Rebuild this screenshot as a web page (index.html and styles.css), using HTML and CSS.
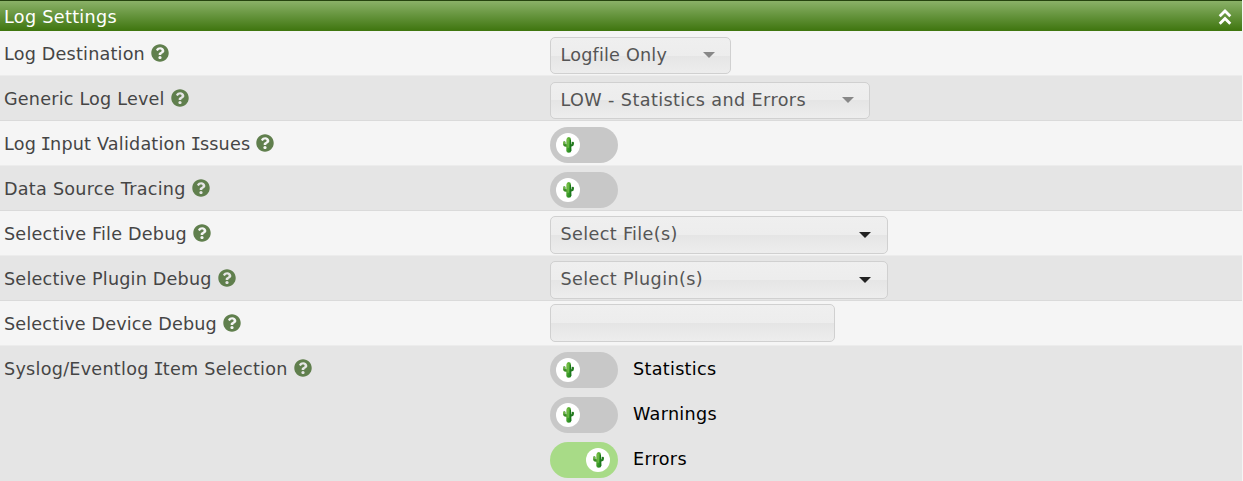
FILE: index.html
```html
<!DOCTYPE html>
<html lang="en">
<head>
<meta charset="utf-8">
<title>Log Settings</title>
<link rel="stylesheet" href="styles.css">
</head>
<body>
<svg class="defs" aria-hidden="true">
  <defs>
    <linearGradient id="stem" x1="0" x2="1" y1="0" y2="1">
      <stop offset="0" stop-color="#77be3e"/>
      <stop offset="0.5" stop-color="#429f2c"/>
      <stop offset="1" stop-color="#147a1a"/>
    </linearGradient>
    <symbol id="help" viewBox="0 0 512 512">
      <path d="M504 256c0 136.997-111.043 248-248 248S8 392.997 8 256C8 119.083 119.043 8 256 8s248 111.083 248 248zM262.655 90c-54.497 0-89.255 22.957-116.549 63.758-3.536 5.286-2.353 12.415 2.715 16.258l34.699 26.31c5.205 3.947 12.621 3.008 16.665-2.122 17.864-22.658 30.113-35.797 57.303-35.797 20.429 0 45.698 13.148 45.698 32.958 0 14.976-12.363 22.667-32.534 33.976C247.128 238.528 216 254.941 216 296v4c0 6.627 5.373 12 12 12h56c6.627 0 12-5.373 12-12v-1.333c0-28.462 83.186-29.647 83.186-106.667 0-58.002-60.165-102-116.531-102zM256 338c-25.365 0-46 20.635-46 46 0 25.364 20.635 46 46 46s46-20.636 46-46c0-25.365-20.635-46-46-46z"/>
    </symbol>
    <symbol id="cactus" viewBox="0 0 24 24">
      <path d="M8.3 9.6v1.2q0 1.7 1.6 1.7h2" fill="none" stroke="#3b8a26" stroke-width="2.5" stroke-linecap="round"/>
      <path d="M14 12.3h1.6q1.2 0 1.2-1.2V9.8" fill="none" stroke="#227a1e" stroke-width="2.3" stroke-linecap="round"/>
      <path d="M8 9.3v1.4" stroke="#8aca58" stroke-width="1.2" stroke-linecap="round"/>
      <path d="M10.4 6.6Q10.6 4.1 12.8 4.1t2.2 2.5l.3 11.2q0 2-2.5 2t-2.5-2z" fill="url(#stem)"/>
      <path d="M12 5.8l.2 9" stroke="#8bcd59" stroke-width="1.1" opacity=".75"/>
      <path d="M14.5 7l.3 11" stroke="#176f1c" stroke-width=".9"/>
    </symbol>
  </defs>
</svg>
<main class="panel">
  <header class="panel-header">
    <span>Log Settings</span>
    <svg class="collapse" viewBox="0 0 14 18"><path d="M1.7 8.3 7 3l5.3 5.3M1.7 15.7 7 10.4l5.3 5.3"/></svg>
  </header>
  <section class="row odd">
    <div class="label">Log Destination<svg class="help"><use href="#help"/></svg></div>
    <div class="field"><div class="select destination"><span>Logfile Only</span><i class="arrow"></i></div></div>
  </section>
  <section class="row even">
    <div class="label">Generic Log Level<svg class="help"><use href="#help"/></svg></div>
    <div class="field"><div class="select level"><span>LOW - Statistics and Errors</span><i class="arrow"></i></div></div>
  </section>
  <section class="row odd">
    <div class="label"><span>Log <span class="slab">I</span>nput Validation <span class="slab">I</span>ssues</span><svg class="help"><use href="#help"/></svg></div>
    <div class="field"><div class="toggle"><svg class="knob"><use href="#cactus"/></svg></div></div>
  </section>
  <section class="row even">
    <div class="label tracing">Data Source Tracing<svg class="help"><use href="#help"/></svg></div>
    <div class="field"><div class="toggle"><svg class="knob"><use href="#cactus"/></svg></div></div>
  </section>
  <section class="row odd">
    <div class="label">Selective File Debug<svg class="help"><use href="#help"/></svg></div>
    <div class="field"><div class="select multi"><span>Select File(s)</span><i class="arrow"></i></div></div>
  </section>
  <section class="row even">
    <div class="label">Selective Plugin Debug<svg class="help"><use href="#help"/></svg></div>
    <div class="field"><div class="select multi"><span>Select Plugin(s)</span><i class="arrow"></i></div></div>
  </section>
  <section class="row odd">
    <div class="label device">Selective Device Debug<svg class="help"><use href="#help"/></svg></div>
    <div class="field"><div class="select textbox"></div></div>
  </section>
  <section class="row even last">
    <div class="label syslog"><span>Syslog/Eventlog <span class="slab">I</span>tem Selection</span><svg class="help"><use href="#help"/></svg></div>
    <div class="field options">
      <div class="option"><div class="toggle"><svg class="knob"><use href="#cactus"/></svg></div><span>Statistics</span></div>
      <div class="option"><div class="toggle"><svg class="knob"><use href="#cactus"/></svg></div><span>Warnings</span></div>
      <div class="option"><div class="toggle on"><svg class="knob"><use href="#cactus"/></svg></div><span>Errors</span></div>
    </div>
  </section>
</main>
</body>
</html>
```
FILE: styles.css
```css
* { box-sizing: border-box; }
body {
  margin: 0;
  background: #f5f5f5;
  font: 17.6px/20px "DejaVu Sans", Verdana, sans-serif;
  color: #454545;
  overflow: hidden;
}
.defs { position: absolute; width: 0; height: 0; }
.panel { margin-right: 1px; height: 481px; overflow: hidden; }
.panel-header {
  display: flex;
  justify-content: space-between;
  height: 31px;
  padding: 6px 10px 0 4px;
  border-top: 1px solid #25430f;
  background: linear-gradient(#8ab168, #3e750e);
  color: #fff;
  letter-spacing: .32px;
}
.collapse {
  width: 14px;
  height: 18px;
  margin-top: 1px;
  fill: none;
  stroke: #fff;
  stroke-width: 2.8;
}
.row {
  display: grid;
  grid-template-columns: 550px 1fr;
  height: 45px;
}
.odd { background: #f5f5f5; border-bottom: 1px solid #ececec; }
.even { background: #e5e5e5; border-bottom: 1px solid #dadada; }
.last { height: 136px; border-bottom: 0; }
.label {
  display: flex;
  align-items: flex-start;
  padding: 13px 0 0 4px;
  letter-spacing: .2px;
  white-space: nowrap;
}
.tracing { letter-spacing: .26px; }
.device { letter-spacing: .15px; }
.syslog { letter-spacing: .26px; }
.slab {
  margin: 0 -1.3px;
  font-family: "DejaVu Sans Mono", monospace;
  line-height: 1;
}
.help { width: 18px; height: 18px; margin-left: 6px; fill: #607f4d; }
.field { padding-top: 6px; }
.select {
  display: flex;
  justify-content: space-between;
  height: 37px;
  padding: 7px 15px 0 9.5px;
  border: 1px solid #d0d0d0;
  border-radius: 5px;
  background: linear-gradient(#efefef 0%, #ededed 50%, #e5e5e5 50%, #ededed 100%);
  color: #555;
}
.destination { width: 181px; letter-spacing: .2px; }
.level { width: 320px; letter-spacing: .4px; }
.arrow {
  width: 12px;
  height: 6px;
  margin-top: 7px;
  background: #888;
  clip-path: polygon(0 0, 100% 0, 50% 100%);
}
.multi {
  width: 338px;
  height: 38px;
  margin-top: -1px;
  padding-right: 16px;
  letter-spacing: .36px;
}
.multi .arrow { margin-top: 8px; background: #222; }
.textbox { width: 285px; height: 38px; margin-top: -3px; }
.toggle {
  flex: none;
  width: 68px;
  height: 36px;
  padding: 6px;
  border-radius: 18px;
  background: #c8c8c8;
}
.knob { display: block; width: 24px; height: 24px; border-radius: 50%; background: #fff; }
.toggle.on { background: #a8db87; }
.on .knob { margin-left: 30px; }
.options { display: grid; grid-auto-rows: 36px; gap: 9px; }
.option { display: flex; gap: 15px; color: #000; letter-spacing: .3px; }
.option > span { padding-top: 7px; }
```
